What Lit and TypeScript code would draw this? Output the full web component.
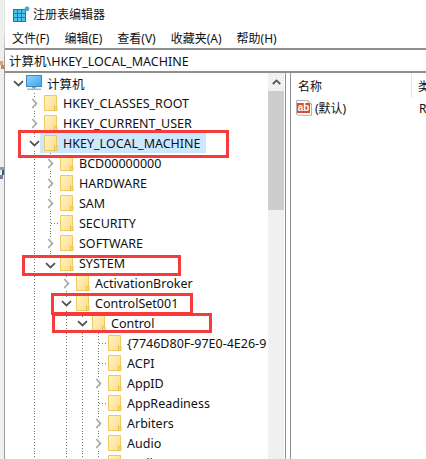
import { LitElement, html, css, svg } from "lit";
import { customElement } from "lit/decorators.js";

type Row = { label: string; level: number; kind: "open" | "closed" | "leaf"; guides: number[]; sel?: boolean; end?: boolean };

const L2 = [1];
const L4 = [1, 3];
const L5 = [1, 3, 4];

const rows: Row[] = [
  { label: "计算机", level: 0, kind: "open", guides: [] },
  { label: "HKEY_CLASSES_ROOT", level: 1, kind: "closed", guides: [] },
  { label: "HKEY_CURRENT_USER", level: 1, kind: "closed", guides: [] },
  { label: "HKEY_LOCAL_MACHINE", level: 1, kind: "open", guides: [], sel: true },
  { label: "BCD00000000", level: 2, kind: "closed", guides: L2 },
  { label: "HARDWARE", level: 2, kind: "closed", guides: L2 },
  { label: "SAM", level: 2, kind: "closed", guides: L2 },
  { label: "SECURITY", level: 2, kind: "leaf", guides: L2 },
  { label: "SOFTWARE", level: 2, kind: "closed", guides: L2 },
  { label: "SYSTEM", level: 2, kind: "open", guides: L2, end: true },
  { label: "ActivationBroker", level: 3, kind: "closed", guides: L2 },
  { label: "ControlSet001", level: 3, kind: "open", guides: L2 },
  { label: "Control", level: 4, kind: "open", guides: L4 },
  { label: "{7746D80F-97E0-4E26-9", level: 5, kind: "leaf", guides: L5 },
  { label: "ACPI", level: 5, kind: "leaf", guides: L5 },
  { label: "AppID", level: 5, kind: "closed", guides: L5 },
  { label: "AppReadiness", level: 5, kind: "leaf", guides: L5 },
  { label: "Arbiters", level: 5, kind: "closed", guides: L5 },
  { label: "Audio", level: 5, kind: "closed", guides: L5 },
  { label: "audit", level: 5, kind: "leaf", guides: L5 },
];

const menus = ["文件(F)", "编辑(E)", "查看(V)", "收藏夹(A)", "帮助(H)"];

const folder = svg`<svg class="ico" width="16" height="16" viewBox="0 0 16 16">
  <defs><linearGradient id="fg" x1="0" y1="0" x2="1" y2="0.6">
    <stop offset="0" stop-color="#fff3c8"/><stop offset="1" stop-color="#fde08f"/></linearGradient></defs>
  <path d="M2.5 .5H14.5V15.5H2.5Z" fill="url(#fg)" stroke="#eccb5e"/>
  <path d="M12.5 15.5V11.5H15V15.5Z" fill="#fbe39b" stroke="#e6bd48"/>
</svg>`;

const monitor = svg`<svg class="ico" width="16" height="16" viewBox="0 0 16 16">
  <defs><linearGradient id="ms" x1="0" y1="0" x2="1" y2="1">
    <stop offset="0" stop-color="#8fd6fb"/><stop offset="1" stop-color="#3ea4ee"/></linearGradient></defs>
  <rect x=".5" y=".5" width="15" height="11" fill="url(#ms)" stroke="#3a88bd"/>
  <rect x="6" y="12" width="4" height="1.5" fill="#8aa0ae"/>
  <rect x="1" y="13.5" width="14" height="1.5" fill="#a9b9c3"/>
</svg>`;

const chevOpen = svg`<svg width="11" height="7" viewBox="0 0 11 7"><path d="M1 1.2 5.5 5.4 10 1.2" fill="none" stroke="#555" stroke-width="1.8"/></svg>`;
const chevClosed = svg`<svg width="7" height="11" viewBox="0 0 7 11"><path d="M1.2 1 5.4 5.5 1.2 10" fill="none" stroke="#aaa" stroke-width="1.8"/></svg>`;

const regIcon = svg`<svg width="16" height="17" viewBox="0 0 16 17">
  <path d="M.5 .5H12L15.5 4V15.5C13 14 11 16.5 8 15.5 5.5 14.7 3 16 .5 14.5Z" fill="#fff" stroke="#b3b3b3"/>
  <path d="M12 .5V4H15.5" fill="none" stroke="#b3b3b3"/>
  <rect x="1" y="3" width="13" height="10" fill="#d5502c"/>
  <text x="7.5" y="11" text-anchor="middle" font-family="'Liberation Sans',sans-serif" font-weight="700" font-size="10" fill="#fff">ab</text>
</svg>`;

const windowIcon = svg`<svg width="17" height="17" viewBox="0 0 17 17">
  <rect x="0" y="3" width="13" height="13" fill="#0e7fc2"/>
  <g fill="#4cc2f1">
    <rect x="1" y="4" width="3" height="3"/><rect x="5" y="4" width="3" height="3"/><rect x="9" y="4" width="3" height="3"/>
    <rect x="1" y="8" width="3" height="3"/><rect x="5" y="8" width="3" height="3"/><rect x="9" y="8" width="3" height="3"/>
    <rect x="1" y="12" width="3" height="3"/><rect x="5" y="12" width="3" height="3"/><rect x="9" y="12" width="3" height="3"/>
  </g>
  <circle cx="14" cy="2.8" r="2.4" fill="#3fa9dc"/>
</svg>`;

const edge = svg`<svg width="4" height="459" viewBox="0 0 4 459">
  <rect x="0" y="61" width="3" height="4" fill="#d9a27c"/>
  <rect x="1" y="65" width="3" height="4" fill="#b98a6a"/>
  <rect x="0" y="167" width="4" height="3" fill="#8c9bb0"/>
  <rect x="2" y="170" width="2" height="5" fill="#3d5a80"/>
  <rect x="0" y="175" width="3" height="4" fill="#6f7f95"/>
</svg>`;

@customElement("app-root")
export class AppRoot extends LitElement {
  static styles = css`
    :host {
      display: block;
      position: relative;
      width: 426px;
      height: 459px;
      overflow: hidden;
      background: #fff;
      font-family: "Noto Sans", "Noto Sans CJK SC", sans-serif;
      font-size: 12px;
      color: #111;
    }
    .page { display: flex; height: 100%; }
    .strip { width: 4px; flex: none; background: #efefef; line-height: 0; }
    .border { width: 1px; flex: none; background: linear-gradient(#e4e4e4 0 30px, #9c9c9c 60px); }
    .win { flex: 1; min-width: 0; display: flex; flex-direction: column; background: #fff; }
    .title { height: 28px; flex: none; display: flex; align-items: center; gap: 3px; padding-left: 8px; box-sizing: border-box; }
    .menu { height: 20px; flex: none; display: flex; align-items: center; gap: 15px; padding-left: 7px; }
    .rule { height: 2px; flex: none; background: #8f8f8f; }
    .addr { height: 21px; flex: none; display: flex; align-items: center; padding-left: 4px; white-space: nowrap; font-size: 12.5px; }
    .body { flex: 1; min-height: 0; display: flex; }
    .tree { width: 263px; flex: none; overflow: hidden; padding-left: 5px; box-sizing: border-box; font-size: 12.5px; }
    .row { height: 20px; display: flex; align-items: stretch; white-space: nowrap; }
    .col { width: 16px; flex: none; display: flex; align-items: center; justify-content: center; }
    .dots {
      background-image: linear-gradient(to bottom, #777 50%, transparent 50%);
      background-size: 1px 3px;
      background-repeat: repeat-y;
      background-position: center top;
    }
    .leaf { align-items: stretch; justify-content: flex-start; }
    .leaf::after {
      content: "";
      display: block;
      flex: 1;
      margin-left: 9px;
      background-image: linear-gradient(to right, #777 50%, transparent 50%);
      background-size: 3px 1px;
      background-repeat: repeat-x;
      background-position: left center;
    }
    .mask {
      width: 14px;
      height: 13px;
      flex: none;
      background: #fff;
      display: flex;
      align-items: center;
      justify-content: center;
    }
    .end { flex-direction: column; justify-content: flex-start; }
    .end .stub { width: 1px; height: 4px; flex: none;
      background-image: linear-gradient(to bottom, #777 50%, transparent 50%); background-size: 1px 3px; }
    .end .mask { margin-top: 2px; }
    .node { display: flex; align-items: center; gap: 5px; margin-left: -2px; padding: 0 5px 0 2px; }
    .node.sel { background: #cce8ff; }
    .ico { display: block; flex: none; }
    .scroll { width: 16px; flex: none; background: #f0f0f0; display: flex; flex-direction: column; }
    .up { height: 18px; flex: none; display: flex; align-items: center; justify-content: center; }
    .thumb { height: 119px; flex: none; background: #cdcdcd; }
    .split { width: 7px; flex: none; display: flex; background: #fff; padding-left: 1px; box-sizing: border-box; }
    .split i { display: block; width: 1px; height: 100%; background: #8f8f96; }
    .split i + i { margin-left: 4px; }
    .pane { flex: 1; min-width: 0; overflow: hidden; white-space: nowrap; }
    .phead { height: 25px; display: grid; grid-template-columns: 120px 1px auto; align-items: stretch; }
    .phead span { align-self: center; }
    .phead .n { padding-left: 7px; }
    .phead .sep { background: #e5e5e5; }
    .phead .t { padding-left: 6px; }
    .prow { height: 20px; display: grid; grid-template-columns: 128px auto; align-items: center; }
    .prow .a { display: flex; align-items: center; gap: 3px; padding-left: 5px; }
    .box { position: absolute; border: 3px solid #f73b3b; box-sizing: border-box; pointer-events: none; }
    .b1 { left: 18px; top: 130px; width: 211px; height: 28px; }
    .b2 { left: 22px; top: 255px; width: 159px; height: 21px; }
    .b3 { left: 51px; top: 293px; width: 142px; height: 22px; }
    .b4 { left: 52px; top: 313px; width: 160px; height: 20px; }
  `;

  private renderCol(r: Row) {
    if (r.level === 0) return html`<div class="col"><span class="mask">${chevOpen}</span></div>`;
    if (r.kind === "leaf") return html`<div class="col dots leaf"></div>`;
    const glyph = r.kind === "open" ? chevOpen : chevClosed;
    if (r.end) return html`<div class="col end"><span class="stub"></span><span class="mask">${glyph}</span></div>`;
    return html`<div class="col dots"><span class="mask">${glyph}</span></div>`;
  }

  private renderRow(r: Row) {
    const before = [];
    for (let i = 0; i < r.level; i++) {
      before.push(html`<div class="col ${r.guides.includes(i) ? "dots" : ""}"></div>`);
    }
    return html`<div class="row">
      ${before}${this.renderCol(r)}
      <div class="node ${r.sel ? "sel" : ""}">${r.level === 0 ? monitor : folder}<span>${r.label}</span></div>
    </div>`;
  }

  render() {
    return html`<div class="page">
        <div class="strip">${edge}</div>
        <div class="border"></div>
        <div class="win">
          <div class="title">${windowIcon}<span>注册表编辑器</span></div>
          <div class="menu">${menus.map((m) => html`<span>${m}</span>`)}</div>
          <div class="rule"></div>
          <div class="addr">计算机\\HKEY_LOCAL_MACHINE</div>
          <div class="rule"></div>
          <div class="body">
            <div class="tree">${rows.map((r) => this.renderRow(r))}</div>
            <div class="scroll">
              <div class="up"><svg width="9" height="6" viewBox="0 0 9 6"><path d="M.8 5 4.5 1.4 8.2 5" fill="none" stroke="#555" stroke-width="1.8"/></svg></div>
              <div class="thumb"></div>
            </div>
            <div class="split"><i></i><i></i></div>
            <div class="pane">
              <div class="phead"><span class="n">名称</span><div class="sep"></div><span class="t">类型</span></div>
              <div class="prow"><div class="a">${regIcon}<span>(默认)</span></div><span>REG_SZ</span></div>
            </div>
          </div>
        </div>
      </div>
      <div class="box b1"></div>
      <div class="box b2"></div>
      <div class="box b3"></div>
      <div class="box b4"></div>`;
  }
}
